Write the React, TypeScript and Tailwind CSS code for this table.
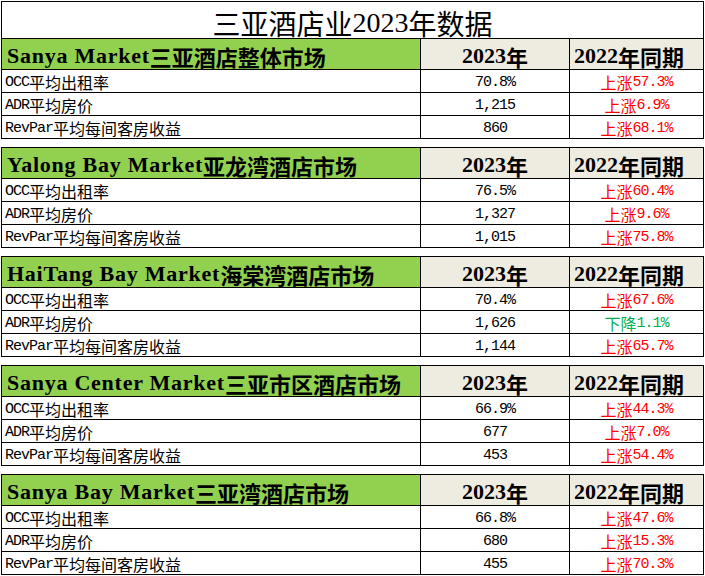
import clsx from "clsx"

// 三亚酒店业 2023 数据表

const sections = [
  {
    name: "Sanya Market三亚酒店整体市场",
    rows: [
      ["70.8%", "上涨57.3%"],
      ["1,215", "上涨6.9%"],
      ["860", "上涨68.1%"],
    ],
  },
  {
    name: "Yalong Bay Market亚龙湾酒店市场",
    rows: [
      ["76.5%", "上涨60.4%"],
      ["1,327", "上涨9.6%"],
      ["1,015", "上涨75.8%"],
    ],
  },
  {
    name: "HaiTang Bay Market海棠湾酒店市场",
    rows: [
      ["70.4%", "上涨67.6%"],
      ["1,626", "下降1.1%"],
      ["1,144", "上涨65.7%"],
    ],
  },
  {
    name: "Sanya Center Market三亚市区酒店市场",
    rows: [
      ["66.9%", "上涨44.3%"],
      ["677", "上涨7.0%"],
      ["453", "上涨54.4%"],
    ],
  },
  {
    name: "Sanya Bay Market三亚湾酒店市场",
    rows: [
      ["66.8%", "上涨47.6%"],
      ["680", "上涨15.3%"],
      ["455", "上涨70.3%"],
    ],
  },
]

const labels = ["OCC平均出租率", "ADR平均房价", "RevPar平均每间客房收益"]

// 英文数字和中文分开设字体
const Mixed = ({ text, latin }: { text: string; latin: string }) => {
  const parts = text.split(/([\x00-\x7F]+)/).filter((p) => p !== "")
  return (
    <>
      {parts.map((p, i) =>
        /^[\x00-\x7F]+$/.test(p) ? (
          <span key={i} className={latin}>
            {p}
          </span>
        ) : (
          <span key={i}>{p}</span>
        )
      )}
    </>
  )
}

const headLatin = "font-['Liberation_Serif'] tracking-[0.75px]"
const cellLatin = "font-['Liberation_Mono'] text-[15px] tracking-[-1px] align-[-1px]"

export default function App() {
  return (
    <div className="w-[705px] h-[576px] bg-white pt-px pl-px text-black font-['Noto_Sans_CJK_SC',sans-serif]">
      {/* 标题 */}
      <div className="w-[703px] h-[38px] border border-black flex items-center justify-center pt-[5px] text-[28px] leading-none">
        <Mixed text="三亚酒店业2023年数据" latin="font-['Liberation_Serif']" />
      </div>

      {sections.map((s, si) => (
        <div key={si} className={clsx("w-[703px] border-x border-black", si > 0 && "mt-[8px] border-t")}>
          {/* 表头 */}
          <div className="grid grid-cols-[419px_149px_133px] h-[31px] border-b border-black text-[22px] font-bold leading-none">
            <div className="bg-[#92d050] border-r border-black flex items-center pl-[5px] pt-[4px] whitespace-nowrap">
              <Mixed text={s.name} latin={headLatin} />
            </div>
            <div className="bg-[#eeece1] border-r border-black flex items-center justify-center pt-[4px]">
              <Mixed text="2023年" latin="font-['Liberation_Serif']" />
            </div>
            <div className="bg-[#eeece1] flex items-center pl-[4px] pt-[4px] whitespace-nowrap">
              <Mixed text="2022年同期" latin="font-['Liberation_Serif']" />
            </div>
          </div>

          {/* 数据行 */}
          {s.rows.map((r, ri) => (
            <div key={ri} className="grid grid-cols-[419px_149px_133px] h-[23px] border-b border-black text-[16px] leading-none">
              <div className="border-r border-black flex items-center pl-[3px] pt-[2px] whitespace-nowrap">
                <Mixed text={labels[ri]} latin={cellLatin} />
              </div>
              <div className="border-r border-black flex items-center justify-center pt-[2px]">
                <Mixed text={r[0]} latin={cellLatin} />
              </div>
              <div
                className={clsx(
                  "flex items-center justify-center pt-[2px]",
                  r[1].startsWith("下降") ? "text-[#00b050]" : "text-[#ff0000]"
                )}
              >
                <Mixed text={r[1]} latin={cellLatin} />
              </div>
            </div>
          ))}
        </div>
      ))}
    </div>
  )
}
